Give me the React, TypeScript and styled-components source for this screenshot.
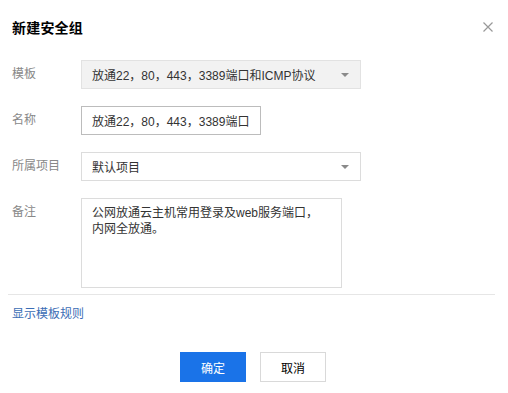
import React from 'react';
import styled, { createGlobalStyle } from 'styled-components';

const GlobalStyle = createGlobalStyle`
  html, body {
    margin: 0;
    padding: 0;
    background: #fff;
  }
  body {
    font-family: "Liberation Sans", "Noto Sans CJK SC", sans-serif;
    font-size: 12px;
    color: #333;
  }
`;

const fields = [
  { label: '模板', kind: 'select', value: '放通22，80，443，3389端口和ICMP协议', grey: true },
  { label: '名称', kind: 'input', value: '放通22，80，443，3389端口' },
  { label: '所属项目', kind: 'select', value: '默认项目' },
];

const Arrow = () => (
  <svg width="8" height="4" viewBox="0 0 8 4">
    <path d="M0 0 L8 0 L4 4 Z" fill="#8a8a8a" />
  </svg>
);

const App = () => {
  return (
    <Dialog>
      <GlobalStyle />
      <Header>
        <Title>新建安全组</Title>
        <Close aria-label="close">
          <svg width="10" height="10" viewBox="0 0 10 10">
            <path d="M0.5 0.5 L9.5 9.5 M9.5 0.5 L0.5 9.5" stroke="#999" strokeWidth="1.2" />
          </svg>
        </Close>
      </Header>
      <Form>
        {fields.map((f) => (
          <Row key={f.label}>
            <Label>{f.label}</Label>
            {f.kind === 'select' ? (
              <Select $grey={f.grey}>
                <span>{f.value}</span>
                <Arrow />
              </Select>
            ) : (
              <Input>{f.value}</Input>
            )}
          </Row>
        ))}
        <Row>
          <Label>备注</Label>
          <TextArea>
            公网放通云主机常用登录及web服务端口，
            <br />
            内网全放通。
          </TextArea>
        </Row>
      </Form>
      <Divider />
      <RuleLink>显示模板规则</RuleLink>
      <Footer>
        <Button $primary>确定</Button>
        <Button>取消</Button>
      </Footer>
    </Dialog>
  );
};

const Dialog = styled.div`
  width: 508px;
  height: 393px;
  box-sizing: border-box;
  padding: 0 13px 0 8px;
  display: flex;
  flex-direction: column;
`;

const Header = styled.div`
  display: flex;
  justify-content: space-between;
  align-items: center;
  height: 20px;
  margin-top: 17px;
  padding-left: 4px;
`;

const Title = styled.div`
  font-size: 14px;
  font-weight: 700;
  color: #000;
  letter-spacing: 0.2px;
`;

const Close = styled.div`
  display: flex;
  align-items: center;
  margin-right: 2px;
`;

const Form = styled.div`
  display: flex;
  flex-direction: column;
  gap: 17px;
  margin-top: 23px;
  padding-left: 4px;
`;

const Row = styled.div`
  display: grid;
  grid-template-columns: 69px auto;
  align-items: start;
`;

const Label = styled.div`
  color: #888;
  line-height: 29px;
`;

const Select = styled.div<{ $grey?: boolean }>`
  width: 280px;
  height: 29px;
  box-sizing: border-box;
  border: 1px solid ${(p) => (p.$grey ? '#e2e2e2' : '#dcdcdc')};
  background: ${(p) => (p.$grey ? '#f2f2f2' : '#fff')};
  display: flex;
  justify-content: space-between;
  align-items: center;
  padding: 0 11px 0 10px;
  color: #333;
  font-size: 12px;
`;

const Input = styled.div`
  width: 180px;
  height: 29px;
  box-sizing: border-box;
  border: 1px solid #bcbcbc;
  display: flex;
  align-items: center;
  padding: 0 10px;
  color: #333;
  white-space: nowrap;
  overflow: hidden;
`;

const TextArea = styled.div`
  width: 261px;
  height: 90px;
  box-sizing: border-box;
  border: 1px solid #dcdcdc;
  padding: 6px 10px;
  line-height: 16px;
  color: #333;
`;

const Divider = styled.div`
  height: 1px;
  background: #e6e6e6;
  margin-top: 6px;
`;

const RuleLink = styled.a`
  color: #3b6db5;
  margin-top: 11px;
  padding-left: 4px;
  line-height: 16px;
  cursor: pointer;
`;

const Footer = styled.div`
  display: flex;
  justify-content: center;
  gap: 14px;
  margin-top: 30px;
  padding-left: 3px;
`;

const Button = styled.button<{ $primary?: boolean }>`
  width: 66px;
  height: 30px;
  font-family: inherit;
  font-size: 12px;
  border: 1px solid ${(p) => (p.$primary ? '#1a73e8' : '#d9d9d9')};
  background: ${(p) => (p.$primary ? '#1a73e8' : '#fff')};
  color: ${(p) => (p.$primary ? '#fff' : '#000')};
  padding: 0;
  cursor: pointer;
`;

export default App;
